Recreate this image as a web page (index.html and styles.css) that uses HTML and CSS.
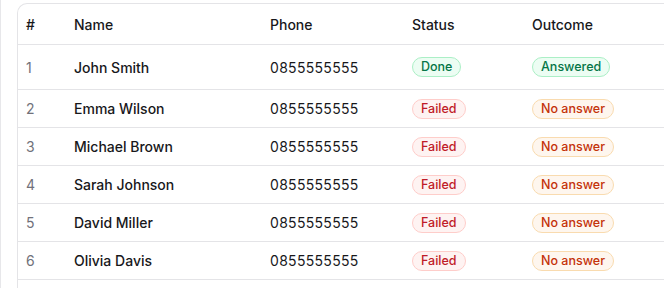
FILE: index.html
```html
<!DOCTYPE html>
<html>
<head>
<meta charset="utf-8">
<link rel="stylesheet" href="styles.css">
</head>
<body>
<div class="page">
  <div class="card">
    <table class="calls">
      <thead>
        <tr class="head-row">
          <th class="c-num">#</th>
          <th class="c-name">Name</th>
          <th class="c-phone">Phone</th>
          <th class="c-status">Status</th>
          <th class="c-outcome">Outcome</th>
        </tr>
      </thead>
      <tbody>
        <tr class="row first">
          <td class="c-num">1</td>
          <td class="c-name">John Smith</td>
          <td class="c-phone">0855555555</td>
          <td class="c-status"><span class="badge green">Done</span></td>
          <td class="c-outcome"><span class="badge green">Answered</span></td>
        </tr>
        <tr class="row">
          <td class="c-num">2</td>
          <td class="c-name">Emma Wilson</td>
          <td class="c-phone">0855555555</td>
          <td class="c-status"><span class="badge red">Failed</span></td>
          <td class="c-outcome"><span class="badge orange">No answer</span></td>
        </tr>
        <tr class="row">
          <td class="c-num">3</td>
          <td class="c-name">Michael Brown</td>
          <td class="c-phone">0855555555</td>
          <td class="c-status"><span class="badge red">Failed</span></td>
          <td class="c-outcome"><span class="badge orange">No answer</span></td>
        </tr>
        <tr class="row">
          <td class="c-num">4</td>
          <td class="c-name">Sarah Johnson</td>
          <td class="c-phone">0855555555</td>
          <td class="c-status"><span class="badge red">Failed</span></td>
          <td class="c-outcome"><span class="badge orange">No answer</span></td>
        </tr>
        <tr class="row">
          <td class="c-num">5</td>
          <td class="c-name">David Miller</td>
          <td class="c-phone">0855555555</td>
          <td class="c-status"><span class="badge red">Failed</span></td>
          <td class="c-outcome"><span class="badge orange">No answer</span></td>
        </tr>
        <tr class="row">
          <td class="c-num">6</td>
          <td class="c-name">Olivia Davis</td>
          <td class="c-phone">0855555555</td>
          <td class="c-status"><span class="badge red">Failed</span></td>
          <td class="c-outcome"><span class="badge orange">No answer</span></td>
        </tr>
      </tbody>
    </table>
  </div>
</div>
</body>
</html>
```

FILE: styles.css
```css
html, body {
  margin: 0;
  padding: 0;
  background: #ffffff;
  overflow: hidden;
}
body {
  font-family: Inter, "Noto Sans", sans-serif;
  color: #18181b;
  width: 664px;
  height: 288px;
}
.page {
  border-left: 1px solid #e7e7ea;
  height: 100%;
  padding: 3px 0 0 16px;
  box-sizing: border-box;
  overflow: hidden;
}
.card {
  width: 660px;
  height: 300px;
  border: 1px solid #e4e4e7;
  border-right: none;
  border-radius: 10px 0 0 0;
  background: #fff;
  overflow: hidden;
}
.calls {
  border-collapse: collapse;
  width: 100%;
  table-layout: fixed;
  font-size: 14px;
}
.calls th, .calls td {
  padding: 0 8px;
  text-align: left;
  white-space: nowrap;
}
.calls th {
  font-weight: 500;
  height: 40px;
  color: #18181b;
  border-bottom: 1px solid #e4e4e7;
}
.calls td {
  height: 37px;
  border-bottom: 1px solid #e4e4e7;
}
.row.first td {
  height: 44px;
}
.c-num { width: 32px; }
.c-name { width: 180px; }
.c-phone { width: 126px; }
.c-status { width: 104px; }
.calls td.c-num {
  color: #71717a;
  font-weight: 400;
}
.calls td.c-name {
  font-weight: 500;
}
.calls td.c-phone {
  letter-spacing: 0.3px;
  font-weight: 400;
}
.badge {
  display: inline-block;
  font-size: 12.5px;
  line-height: 18px;
  padding: 0 8px;
  border-radius: 999px;
  border: 1px solid;
  font-weight: 500;
}
.badge.green {
  background: #ecfdf3;
  border-color: #abefc6;
  color: #067647;
}
.badge.red {
  background: #fef3f2;
  border-color: #fecdca;
  color: #c01c28;
}
.badge.orange {
  background: #fef6ee;
  border-color: #f9dbaf;
  color: #c4320a;
}
```
